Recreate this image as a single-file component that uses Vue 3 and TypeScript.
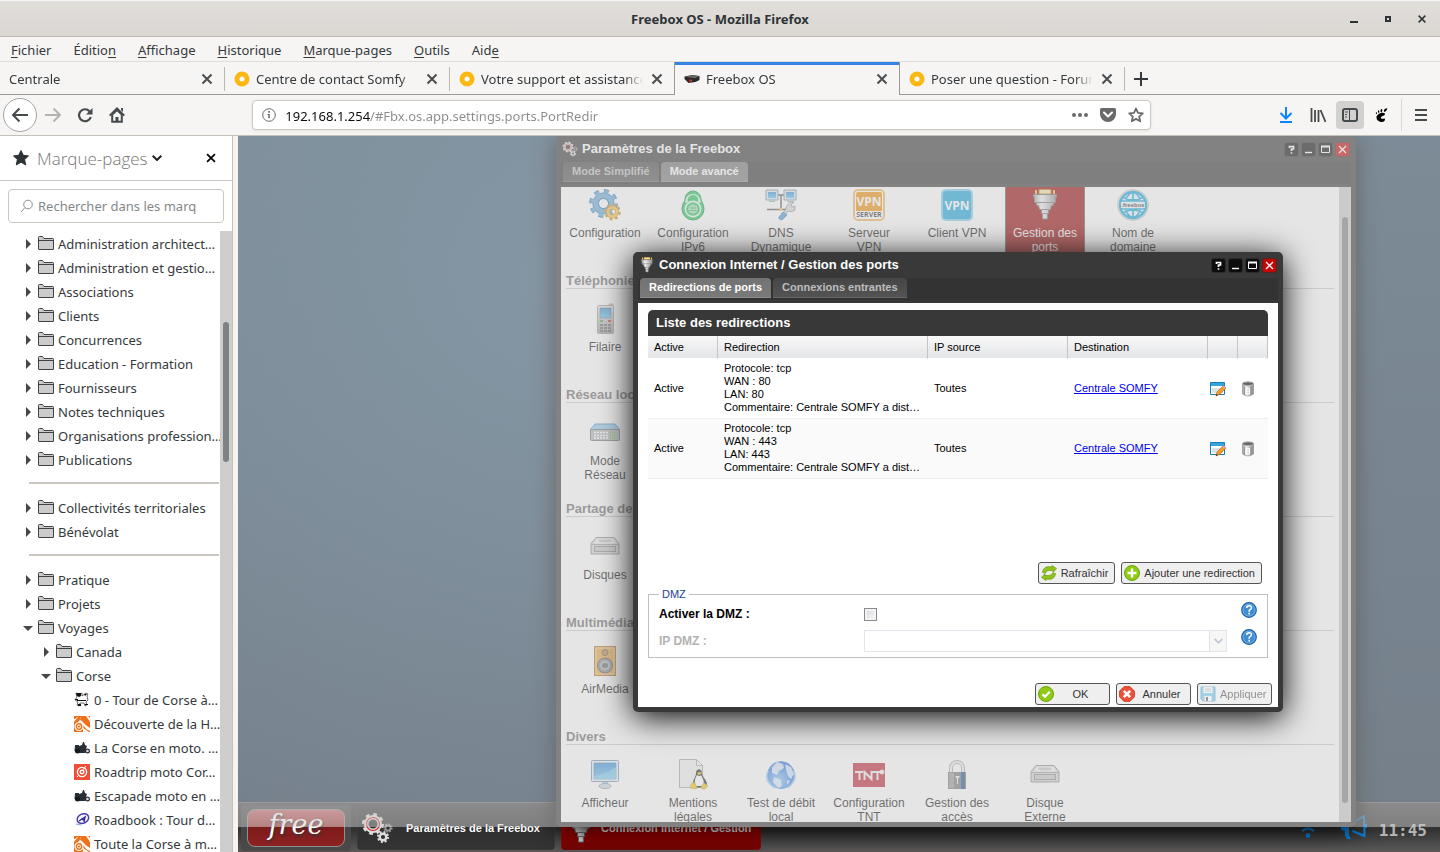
<script setup lang="ts">
import { ref } from 'vue'

interface TreeRow {
  label?: string
  icon?: string
  depth: number
  open?: boolean
}
interface AppItem {
  icon: string
  lines: string[]
  selected?: boolean
}
interface Section {
  title?: string
  items: AppItem[]
}

const menus: string[][] = [
  ['', 'F', 'ichier'],
  ['Éditio', 'n', ''],
  ['', 'A', 'ffichage'],
  ['', 'H', 'istorique'],
  ['', 'M', 'arque-pages'],
  ['', 'O', 'utils'],
  ['Aid', 'e', ''],
]

const tabs = [
  { label: 'Centrale', icon: '', active: false },
  { label: 'Centre de contact Somfy', icon: 'somfy', active: false },
  { label: 'Votre support et assistance', icon: 'somfy', active: false },
  { label: 'Freebox OS', icon: 'box', active: true },
  { label: 'Poser une question - Forum', icon: 'somfy', active: false },
]

const tree: TreeRow[] = [
  { label: 'Administration architect…', depth: 0 },
  { label: 'Administration et gestio…', depth: 0 },
  { label: 'Associations', depth: 0 },
  { label: 'Clients', depth: 0 },
  { label: 'Concurrences', depth: 0 },
  { label: 'Education - Formation', depth: 0 },
  { label: 'Fournisseurs', depth: 0 },
  { label: 'Notes techniques', depth: 0 },
  { label: 'Organisations profession…', depth: 0 },
  { label: 'Publications', depth: 0 },
  { depth: 0 },
  { label: 'Collectivités territoriales', depth: 0 },
  { label: 'Bénévolat', depth: 0 },
  { depth: 0 },
  { label: 'Pratique', depth: 0 },
  { label: 'Projets', depth: 0 },
  { label: 'Voyages', depth: 0, open: true },
  { label: 'Canada', depth: 1 },
  { label: 'Corse', depth: 1, open: true },
  { label: '0 - Tour de Corse à…', depth: 2, icon: 'fav-cow' },
  { label: 'Découverte de la H…', depth: 2, icon: 'fav-orange' },
  { label: 'La Corse en moto. …', depth: 2, icon: 'fav-moto' },
  { label: 'Roadtrip moto Cor…', depth: 2, icon: 'fav-red' },
  { label: 'Escapade moto en …', depth: 2, icon: 'fav-moto' },
  { label: 'Roadbook : Tour d…', depth: 2, icon: 'fav-blue' },
  { label: 'Toute la Corse à m…', depth: 2, icon: 'fav-orange' },
]

const sections: Section[] = [
  {
    items: [
      { icon: 'gears', lines: ['Configuration'] },
      { icon: 'ipv6', lines: ['Configuration', 'IPv6'] },
      { icon: 'dns', lines: ['DNS', 'Dynamique'] },
      { icon: 'vpnserver', lines: ['Serveur', 'VPN'] },
      { icon: 'vpn', lines: ['Client VPN'] },
      { icon: 'plug', lines: ['Gestion des', 'ports'], selected: true },
      { icon: 'domain', lines: ['Nom de', 'domaine'] },
    ],
  },
  { title: 'Téléphonie', items: [{ icon: 'phone', lines: ['Filaire'] }] },
  { title: 'Réseau local', items: [{ icon: 'switch', lines: ['Mode', 'Réseau'] }] },
  { title: 'Partage de fichiers', items: [{ icon: 'disk', lines: ['Disques'] }] },
  { title: 'Multimédia', items: [{ icon: 'speaker', lines: ['AirMedia'] }] },
  {
    title: 'Divers',
    items: [
      { icon: 'monitor', lines: ['Afficheur'] },
      { icon: 'tux', lines: ['Mentions', 'légales'] },
      { icon: 'globe', lines: ['Test de débit', 'local'] },
      { icon: 'tnt', lines: ['Configuration', 'TNT'] },
      { icon: 'lock', lines: ['Gestion des', 'accès'] },
      { icon: 'disk', lines: ['Disque', 'Externe'] },
    ],
  },
]

const redirections = [
  { active: 'Active', proto: 'tcp', wan: '80', lan: '80', source: 'Toutes', target: 'Centrale SOMFY' },
  { active: 'Active', proto: 'tcp', wan: '443', lan: '443', source: 'Toutes', target: 'Centrale SOMFY' },
]

const tools = ['help', 'min', 'max', 'close']
const url = ref('192.168.1.254/#Fbx.os.app.settings.ports.PortRedir')
const search = ref('')
const dmz = ref(false)
</script>

<template>
  <div class="screen">
    <svg class="defs" aria-hidden="true">
      <defs>
        <linearGradient id="gSky" x1="0" y1="0" x2="0" y2="1"><stop offset="0" stop-color="#3a8fd8" /><stop offset="1" stop-color="#63c4f0" /></linearGradient>
        <linearGradient id="gGrey" x1="0" y1="0" x2="0" y2="1"><stop offset="0" stop-color="#e8e8e8" /><stop offset="1" stop-color="#9a9a9a" /></linearGradient>
        <linearGradient id="gMetal" x1="0" y1="0" x2="1" y2="0"><stop offset="0" stop-color="#9a9a9a" /><stop offset=".35" stop-color="#f0f0f0" /><stop offset="1" stop-color="#888" /></linearGradient>
        <radialGradient id="gGlobe" cx=".4" cy=".7" r=".7"><stop offset="0" stop-color="#8fd0ff" /><stop offset="1" stop-color="#1b62d8" /></radialGradient>
      </defs>

      <symbol id="x" viewBox="0 0 16 16"><path d="M3.5 3.5l9 9M12.5 3.5l-9 9" stroke="currentColor" stroke-width="2" fill="none" /></symbol>
      <symbol id="plus" viewBox="0 0 16 16"><path d="M8 1v14M1 8h14" stroke="currentColor" stroke-width="2" fill="none" /></symbol>
      <symbol id="somfy" viewBox="0 0 16 16"><circle cx="8" cy="8" r="5" fill="#fff" stroke="#fbb812" stroke-width="5" /></symbol>
      <symbol id="box" viewBox="0 0 16 16"><path d="M.5 5.500l8-1.500 7 1v4l-4 2-7 1-4-4z" fill="#2a2a2a" /><path d="M1 5.700l8-1.500 6 1-4 2z" fill="#6b6a60" /><path d="M5 8.500h2.500V11H5z" fill="#c02525" /><path d="M7 9h1v1H7z" fill="#5a9a30" /></symbol>

      <symbol id="back" viewBox="0 0 18 18"><path d="M17 9H2M8.500 2.500L2 9l6.500 6.500" stroke="currentColor" stroke-width="2" fill="none" /></symbol>
      <symbol id="forward" viewBox="0 0 18 18"><path d="M1 9h15M9.500 2.500L16 9l-6.500 6.500" stroke="currentColor" stroke-width="2" fill="none" /></symbol>
      <symbol id="reload" viewBox="0 0 16 16"><path d="M12.500 4.200A6 6 0 1 0 13.800 10" stroke="currentColor" stroke-width="2.200" fill="none" /><path d="M15.500 1v6.500H9z" fill="currentColor" /></symbol>
      <symbol id="home" viewBox="0 0 16 16"><path d="M8 0l8 8-1.300 1.300L8 2.700 1.300 9.300 0 8z" fill="currentColor" /><path d="M3.200 7.500v7.300h9.600V7.500L8 3z" fill="none" stroke="currentColor" stroke-width="2" /><path d="M6.500 10h3v5h-3z" fill="currentColor" /><path d="M12 1h2v4l-2-2z" fill="currentColor" /></symbol>
      <symbol id="info" viewBox="0 0 14 14"><circle cx="7" cy="7" r="6.300" fill="none" stroke="currentColor" /><path d="M6.200 3h1.700v1.700H6.200zM5.500 6h2.300v4.300H6.300V7h-.8z" fill="currentColor" /></symbol>
      <symbol id="dots" viewBox="0 0 16 16"><circle cx="2" cy="8" r="2" fill="currentColor" /><circle cx="8" cy="8" r="2" fill="currentColor" /><circle cx="14" cy="8" r="2" fill="currentColor" /></symbol>
      <symbol id="pocket" viewBox="0 0 16 16"><path d="M1.500 1h13A1.500 1.500 0 0 1 16 2.500V7A8 8 0 0 1 0 7V2.500A1.500 1.500 0 0 1 1.500 1z" fill="currentColor" /><path d="M4 5.500l4 4 4-4" stroke="#fff" stroke-width="2" stroke-linecap="round" stroke-linejoin="round" fill="none" /></symbol>
      <symbol id="star" viewBox="0 0 16 16"><path d="M8 1.500l2 4.400 4.800.5-3.600 3.200 1 4.700L8 11.900l-4.200 2.400 1-4.700L1.200 6.400 6 5.900z" fill="none" stroke="currentColor" stroke-width="1.800" stroke-linejoin="round" /></symbol>
      <symbol id="starfull" viewBox="0 0 16 16"><path d="M8 .5l2.300 4.800 5.200.6-3.900 3.600 1.100 5.400L8 12.200 3.300 14.900l1.100-5.400L.5 5.900l5.200-.6z" fill="currentColor" stroke="currentColor" stroke-linejoin="round" /></symbol>
      <symbol id="download" viewBox="0 0 14 16"><path d="M7 0v11M1.500 6L7 11.500 12.500 6M1 15h12" stroke="currentColor" stroke-width="2" fill="none" /></symbol>
      <symbol id="library" viewBox="0 0 16 16"><path d="M1.500 1v14M5 3v12M8.500 3v12M10.500 3l5 12" stroke="currentColor" stroke-width="1.800" fill="none" /></symbol>
      <symbol id="sidebar" viewBox="0 0 16 14"><rect x="1" y="1" width="14" height="12" rx="2" fill="none" stroke="currentColor" stroke-width="2" /><path d="M7.500 1v12M3 4h3M3 6.500h2M3 9h2" stroke="currentColor" stroke-width="1" fill="none" /></symbol>
      <symbol id="foot" viewBox="0 0 12 14"><path d="M11.500.2C8.500.2 7.600 3.600 9 3.800s3.500-3.600 2.500-3.600zM6 1c-1.400.4-1.200 3.300-.2 3.300S7.300.8 6 1zM3 2.300c-1.100.5-.6 2.700.3 2.600S4 2 3 2.300zM.7 4.200c-.9.500-.1 2 .6 1.800S1.500 3.800.7 4.200zM9.300 5.500C7.500 3.600 1 6 1 9.300S4 14 6.300 14s3.500-1.600 3.100-3c-.4-1.200-2 .1-3.300-.3s-.8-2 .6-2.500 3.600-1.500 2.600-2.700z" fill="currentColor" /></symbol>
      <symbol id="burger" viewBox="0 0 12 12"><path d="M0 1h12M0 6h12M0 11h12" stroke="currentColor" stroke-width="2" /></symbol>
      <symbol id="chev" viewBox="0 0 10 6"><path d="M.7.700L5 5 9.300.7" stroke="currentColor" stroke-width="2" fill="none" /></symbol>
      <symbol id="search" viewBox="0 0 14 14"><circle cx="8" cy="5.500" r="4.300" fill="none" stroke="currentColor" /><path d="M5 8.500L1 13" stroke="currentColor" /></symbol>
      <symbol id="folder" viewBox="0 0 16 16"><path d="M.5 13V1.500a1 1 0 0 1 1-1h3l1.500 2h8.500a1 1 0 0 1 1 1V13a.5.500 0 0 1-.5.500H1A.5.500 0 0 1 .5 13z" fill="#ccc" stroke="#3f4143" /><path d="M1 4.500h14.500" stroke="#3f4143" /></symbol>

      <symbol id="fav-cow" viewBox="0 0 16 16"><path d="M2 1l3 1 3-1v3l4-3 2 1-1 2 1 4-2 2 1 3-2 1-1-3H6l-1 3-2-1 1-3-3-2 2-3z" fill="#fff" stroke="#444" stroke-width=".8" /><path d="M2 1h5v3L5 5 3 4zM10 2h3l-2 2zM3 8h9v1H3zM4 12h3v2H4zM11 12h3v1h-3zM1 7h3v1H1z" fill="#111" /></symbol>
      <symbol id="fav-orange" viewBox="0 0 16 16"><path d="M0 0h16v16H0z" fill="#f07018" /><path d="M5 0L1 3H0v3q3-4 5-6zM8 0c-3 3-3 4 0 5 2 2 4 5 8 7v3l-4-2C9 8 8 7 4 6c2-1 2-4 4-6zM12 0h2l2 2v4z" fill="#fff" /><circle cx="5" cy="10.500" r="4" fill="#f07018" stroke="#fff" stroke-width="1.200" /><circle cx="5" cy="10.500" r="1.600" fill="none" stroke="#fff" /><path d="M9 12l6 4H9z" fill="#fff" /></symbol>
      <symbol id="fav-moto" viewBox="0 0 16 16"><path d="M1 5h4v1l3-1 1-3h1l1 3 2 1-1 3 1 2-2 2H3L.5 11z" fill="#2a2e36" /><circle cx="3.500" cy="11" r="2.500" fill="#15181d" /><circle cx="13.500" cy="11" r="1.900" fill="#ddd" stroke="#2a2e36" stroke-width="1.200" /></symbol>
      <symbol id="fav-red" viewBox="0 0 16 16"><path d="M0 0h16v16H0z" fill="#ee4e36" /><circle cx="8" cy="8" r="4.600" fill="none" stroke="#fff" stroke-width="1.400" /><circle cx="8" cy="8" r="1.800" fill="none" stroke="#fff" stroke-width="1.400" /><path d="M8 7l4-5M3 13l2-2" stroke="#fff" /></symbol>
      <symbol id="fav-blue" viewBox="0 0 16 16"><ellipse cx="9" cy="7" rx="6" ry="4.600" transform="rotate(-25 8 7)" fill="#f5f3ff" stroke="#4a3fae" stroke-width="1.500" /><path d="M5 9l6-4-1 5M7 7l4 1" stroke="#31298c" stroke-width="1.400" fill="none" /><path d="M2 12l5 1" stroke="#8aa0d8" /></symbol>

      <symbol id="t-help" viewBox="0 0 13 13"><path d="M4.500 5V3.500h4V6H6.500v2M6.500 9.200v1.600" stroke="#fff" stroke-width="1.700" fill="none" /></symbol>
      <symbol id="t-min" viewBox="0 0 13 13"><path d="M3 9.500h7" stroke="#fff" stroke-width="1.400" /></symbol>
      <symbol id="t-max" viewBox="0 0 13 13"><path d="M2.500 3.500h8v6h-8z" fill="none" stroke="#fff" /><path d="M2 3.500h9" stroke="#fff" stroke-width="2" /></symbol>
      <symbol id="t-close" viewBox="0 0 13 13"><path d="M3 3l7 7M10 3l-7 7" stroke="#fff" stroke-width="1.300" /></symbol>

      <symbol id="redgears" viewBox="0 0 32 32">
        <circle cx="12" cy="12" r="9" fill="none" stroke="#ddd" stroke-width="4" stroke-dasharray="3.530" /><circle cx="12" cy="12" r="6.800" fill="none" stroke="#ddd" stroke-width="4.500" /><circle cx="12" cy="12" r="6.500" fill="none" stroke="#d82020" stroke-width="1.200" />
        <circle cx="22" cy="25" r="4.800" fill="none" stroke="#ddd" stroke-width="2.500" stroke-dasharray="1.880" /><circle cx="22" cy="25" r="3.300" fill="none" stroke="#ddd" stroke-width="2.400" />
        <circle cx="27" cy="16" r="3.700" fill="none" stroke="#999" stroke-width="2" stroke-dasharray="1.450" /><circle cx="27" cy="16" r="2.600" fill="none" stroke="#999" stroke-width="1.700" />
      </symbol>

      <symbol id="gears" viewBox="0 0 32 32">
        <circle cx="14.500" cy="14.500" r="12" fill="none" stroke="#3a7fb8" stroke-width="5" stroke-dasharray="4.710" /><circle cx="14.500" cy="14.500" r="7.800" fill="none" stroke="#3a7fb8" stroke-width="6.500" /><circle cx="14.500" cy="14.500" r="8" fill="none" stroke="#68a9d8" stroke-width="4.500" /><circle cx="14.500" cy="14.500" r="11.700" fill="none" stroke="#68a9d8" stroke-width="3.500" stroke-dasharray="3.400 5.790" stroke-dashoffset="-.6" />
        <circle cx="23.500" cy="23" r="6.800" fill="none" stroke="#c98a18" stroke-width="3" stroke-dasharray="2.670" /><circle cx="23.500" cy="23" r="4.500" fill="none" stroke="#c98a18" stroke-width="4" /><circle cx="23.500" cy="23" r="4.500" fill="none" stroke="#f7c04a" stroke-width="2.600" />
      </symbol>
      <symbol id="ipv6" viewBox="0 0 32 32">
        <path d="M8 10a8 8 0 0 1 16 0c0 2 3 5 3 10a11 11 0 0 1-22 0c0-5 3-8 3-10z" fill="#22c05a" stroke="#12a046" stroke-width="1" /><path d="M8.500 14c-1-12 16-12 15 0l-2.500-1c0-6-10-6-10 0z" fill="#e8f8ee" /><path d="M10.500 12c0-8 11-8 11 0q-5.500-3-11 0z" fill="#22c05a" /><circle cx="16" cy="20" r="7.600" fill="#22c05a" stroke="#e8f8ee" stroke-width="1.600" /><circle cx="16" cy="20" r="4.600" fill="#e8f8ee" /><path d="M11.500 19h9M11.500 21.500h9M16 15.500v9M14 16v8M18 16v8" stroke="#22b055" stroke-width=".8" />
      </symbol>
      <symbol id="dns" viewBox="0 0 32 32">
        <path d="M13 6h6M16 6v14M2 20.500h28" stroke="#555" stroke-width="1.500" fill="none" /><path d="M1 1h12v10H1zM19 1h12v10H19z" fill="#dce6ee" stroke="#7890a8" /><path d="M3 3h8v6H3zM21 3h8v6h-8z" fill="url(#gSky)" /><path d="M4 12h6v1H4zM22 12h6v1h-6z" fill="#8ba" /><path d="M29 13l-3 3 1 2 3-1v3c-1 3-5 3-7 2l-3 4-2-2 3-4c0-3 2-7 8-7z" fill="#d4d8da" stroke="#7c8488" stroke-width=".8" /><path d="M18 23l4 3-4 4c-2 2-5 0-4-2z" fill="#4b9bdc" stroke="#2c6ca8" stroke-width=".7" /><circle cx="16" cy="20.500" r="1.800" fill="#f6b93d" />
      </symbol>
      <symbol id="vpnserver" viewBox="0 0 32 32"><rect x="1" y="1" width="30" height="30" rx="4" fill="#fff" stroke="#f2b35a" stroke-width="2" /><path d="M3 5a2 2 0 0 1 2-2h22a2 2 0 0 1 2 2v17H3z" fill="#ee8f0c" /><text x="16" y="17" font-family="Open Sans" font-size="12" font-weight="700" text-anchor="middle" fill="#fff">VPN</text><text x="16" y="28" font-family="Open Sans" font-size="7" font-weight="700" text-anchor="middle" fill="#333">SERVER</text></symbol>
      <symbol id="vpn" viewBox="0 0 32 32"><rect x="1" y="1" width="30" height="30" rx="4" fill="#15a5dc" stroke="#7fcdec" stroke-width="2" /><text x="16" y="21" font-family="Open Sans" font-size="12" font-weight="700" text-anchor="middle" fill="#fff">VPN</text></symbol>
      <symbol id="plug" viewBox="0 0 32 32">
        <path d="M6 1h2v4h16V1h2v5H6z" fill="#f5b93c" /><path d="M10 .5h12V5H10z" fill="#f9e3a8" stroke="#a97a1c" /><path d="M4.500 5.500h23v3h-1v5h-2v3h-2l-1 4h-2v4h-1v5.500h-5v-5.500h-1v-4h-2l-1-4h-2v-3h-2v-5h-1z" fill="url(#gMetal)" stroke="#6c6c6c" /><path d="M8 13.500h16M11 20.500h10M14 24.500h4" stroke="#777" />
      </symbol>
      <symbol id="domain" viewBox="0 0 32 32"><circle cx="16" cy="16" r="15.500" fill="#ddd" stroke="#c4c4c4" /><circle cx="16" cy="16" r="13" fill="#eef8fc" stroke="#12a4dc" stroke-width="2.400" /><path d="M16 3v8M16 21v8M9 11c1-4 4-7 7-8 3 1 6 4 7 8M9 21c1 4 4 7 7 8 3-1 6-4 7-8M5 8q11 6 22 0M5 24q11-6 22 0M3 12h26M3 20h26" fill="none" stroke="#12a4dc" stroke-width="1.700" /><path d="M4 13h24v6H4z" fill="#eef8fc" /><text x="16" y="18" font-family="Liberation Sans" font-size="6" font-weight="700" text-anchor="middle" fill="#333">.freebox</text></symbol>
      <symbol id="phone" viewBox="0 0 32 32"><path d="M20 1h4v5h-4z" fill="#ddd" stroke="#999" stroke-width=".8" /><rect x="8.500" y="2.500" width="16" height="28" rx="1" fill="url(#gGrey)" stroke="#9a9a9a" /><path d="M11 5h11v10H11z" fill="url(#gSky)" stroke="#666" stroke-width=".5" /><path d="M11 17h3v2h-3z" fill="#55a832" /><path d="M19 17h3v2h-3z" fill="#d03030" /><path d="M11 22h3M15 22h3M19 22h3M11 25h3M15 25h3M19 25h3M11 28h3M15 28h3M19 28h3" stroke="#555" stroke-width="1.500" /></symbol>
      <symbol id="switch" viewBox="0 0 32 32"><path d="M6 7h20l5 6H1z" fill="#8fc8f0" stroke="#4a8fc4" /><rect x="1.500" y="12.500" width="29" height="11" rx="1" fill="#aeb3b6" stroke="#6e7478" /><path d="M5 15.500h14M5 18.500h14M5 21h14" stroke="#fff" stroke-width="1.500" stroke-dasharray="2 1" /><path d="M21 15.500h6M21 18.500h6M21 21h6" stroke="#6cc02a" stroke-width="1.500" stroke-dasharray="1 1" /></symbol>
      <symbol id="disk" viewBox="0 0 32 32"><path d="M7 6.500h18l5 6v10.500h-28V12.500z" fill="#d4d4d4" stroke="#8b8b8b" /><path d="M8 7.500h16l3 5H5z" fill="#f3f3f3" /><path d="M10 8.500h12l1 2q-7 2-14 0z" fill="#c5c5c5" /><path d="M2 13.500h28" stroke="#9b9b9b" /><rect x="5.500" y="15.500" width="21" height="5" fill="#c6c6c6" stroke="#8a8a8a" /></symbol>
      <symbol id="speaker" viewBox="0 0 32 32"><rect x="5.500" y="1.500" width="21" height="29" fill="#e7a447" stroke="#a97227" /><path d="M7 3h18v26H7z" fill="none" stroke="#f5cf92" /><circle cx="16" cy="7.500" r="3" fill="#b48a50" stroke="#7c5a2c" /><circle cx="16" cy="20.500" r="7.500" fill="#878b90" stroke="#50545a" /><circle cx="16" cy="20.500" r="5" fill="#aaaeb2" /><ellipse cx="16" cy="20.500" rx="3" ry="2.500" fill="#64686c" /></symbol>
      <symbol id="monitor" viewBox="0 0 32 32"><rect x="2.500" y="1.500" width="27" height="21" rx="1" fill="#e8f1f6" stroke="#6c93b0" /><path d="M5 4h22v16H5z" fill="url(#gSky)" stroke="#3d7eae" stroke-width=".6" /><path d="M5 17q11-1 22-9v12H5z" fill="#8dd4f5" opacity=".6" /><path d="M13 23h6v3h-6z" fill="#a8bfcd" /><ellipse cx="16" cy="27" rx="6" ry="2.500" fill="#cfdde6" stroke="#86a2b5" /></symbol>
      <symbol id="tux" viewBox="0 0 32 32"><path d="M2.500.5h17l6 6v22h-23z" fill="#f3f3f3" stroke="#a5a5a5" /><path d="M19.500.5v6h6z" fill="#fff" stroke="#a5a5a5" /><path d="M19 14c0-5 6-5 6 0 0 4 5 7 5 11s-13 5-14 1 3-8 3-12z" fill="#252525" /><path d="M20 16c3 2 4 0 4 0 2 4 4 7 2 11h-7c-2-4-1-8 1-11z" fill="#fff" /><path d="M20 14l2 2 3-2-2-1zM14 25l3-2 3 5-1 2-6-1zM27 24l4 3-3 3h-3l-1-2z" fill="#f3c31c" stroke="#b98c10" stroke-width=".5" /></symbol>
      <symbol id="globe" viewBox="0 0 32 32"><circle cx="16" cy="16" r="13.500" fill="url(#gGlobe)" stroke="#4f93e8" /><path d="M7 8l5-5 6 2 1 4-5 3-2 4-5-2zM20 5l6 3 3 7-3 5-3-3-2-6zM9 18l7 3 1 6-4 2-5-6zM22 21l3 1-3 4z" fill="#e8f4ff" opacity=".85" /><path d="M3 12q-5 10 7 17M29 12q4 9-6 17" stroke="#9fd0ff" fill="none" stroke-width="1.500" /></symbol>
      <symbol id="tnt" viewBox="0 0 32 32"><path d="M0 4h32v24H0z" fill="#c02436" /><path d="M2 13h8M6.500 13v8M11.500 21v-8l7 7v-8M19 13h11M24.500 13v8" stroke="#eee" stroke-width="2" fill="none" /><circle cx="29" cy="13" r="2.500" fill="#fff" opacity=".8" /></symbol>
      <symbol id="lock" viewBox="0 0 32 32"><path d="M10 14V9a6 6 0 0 1 12 0v5" fill="none" stroke="#a8a8a8" stroke-width="4" /><path d="M10 14V9a6 6 0 0 1 12 0v5" fill="none" stroke="#f3f3f3" stroke-width="2" /><path d="M7 13h18v17H7z" fill="#777" /><path d="M8 14h5v15H8z" fill="#999" /><path d="M20 13h4v17h-4z" fill="#1e5592" /><path d="M14 17h5l-2 3v5h-1v-5z" fill="#eee" /></symbol>

      <symbol id="edit" viewBox="0 0 16 16"><path d="M.5 1.500h14v12H.5z" fill="#fff" stroke="#157fb8" /><path d="M1 2h13v3H1z" fill="#37a3d8" /><path d="M2 7h11v5H2z" fill="#dce2e6" /><path d="M6 15l1-4 6-6 3 2-6 6z" fill="#f59d2a" stroke="#b05c08" stroke-width=".6" /><path d="M12.500 5.500l1.500-1 2 2-1.500 1.500z" fill="#e79bc0" /><path d="M6 15l.6-2 1.400 1z" fill="#222" /></symbol>
      <symbol id="trash" viewBox="0 0 16 16"><path d="M2.500 3v10q5.500 4 11 0V3z" fill="url(#gMetal)" stroke="#888" stroke-width=".6" /><ellipse cx="8" cy="2.700" rx="5.500" ry="1.900" fill="#666" stroke="#b5b5b5" /><path d="M6 7.500h3.500V13H6zM6 10h3.500" fill="none" stroke="#fff" /><path d="M11 6v8M4.500 6v8" stroke="#777" stroke-width=".6" /></symbol>
      <symbol id="refresh" viewBox="0 0 16 16"><path d="M1.500 7.500C2 3 5 1.800 7 1.800h4V.5L15.500 3.500 12 7.500V5.500H8Q5 5.500 4.500 8zM14.500 8.500C14 13 11 14.200 9 14.200H5v1.300L.5 12.500 4 8.500v2h4q3 0 3.500-2.500z" fill="#8ec31c" stroke="#6a9c10" stroke-width=".7" stroke-linejoin="round" /></symbol>
      <symbol id="add" viewBox="0 0 16 16"><circle cx="8" cy="8" r="7.500" fill="#8fca14" stroke="#6ba30c" /><path d="M8 3.500v9M3.500 8h9" stroke="#fff" stroke-width="2.400" /></symbol>
      <symbol id="ok" viewBox="0 0 16 16"><circle cx="8" cy="8" r="7.500" fill="#8fca14" stroke="#6ba30c" /><path d="M4.500 8.200l2.500 2.500 4.700-5" stroke="#fff" stroke-width="2.200" fill="none" /></symbol>
      <symbol id="cancel" viewBox="0 0 16 16"><path d="M5 .7h6L15.300 5v6L11 15.300H5L.7 11V5z" fill="#f0513a" stroke="#c23a22" /><path d="M4.800 4.800l6.400 6.400M11.200 4.800l-6.400 6.400" stroke="#fff" stroke-width="2.600" /></symbol>
      <symbol id="save" viewBox="0 0 16 16"><path d="M1 1h14v14H3l-2-2z" fill="#5ab4e0" stroke="#3d94c4" /><path d="M3.500 1h9v6h-9z" fill="#eee" /><path d="M5 3h6M5 5h6" stroke="#aaa" /><path d="M4.500 10h7v5h-7z" fill="#f4f4f4" /><path d="M6 11h2v4H6z" fill="#444" /></symbol>
      <symbol id="help" viewBox="0 0 16 16"><circle cx="8" cy="8" r="7.300" fill="#3f8dd0" stroke="#1b5da6" stroke-width="1.200" /><circle cx="8" cy="8" r="6" fill="none" stroke="#8fc2ea" stroke-width=".7" /><path d="M5.700 6q0-2.300 2.400-2.300T10.400 6Q10.400 7.200 8.200 8.400V9.700M8.200 10.800v1.600" stroke="#fff" stroke-width="1.500" fill="none" /></symbol>
      <symbol id="wifi" viewBox="0 0 20 20"><circle cx="10" cy="17.500" r="2.400" fill="#0a84e0" /><path d="M4 13q6-5 12 0M1 8.500q9-7 18 0" stroke="#0a84e0" stroke-width="2.500" fill="none" /></symbol>
      <symbol id="mega" viewBox="0 0 26 26"><path d="M1 11l7-1L23 1l.500 20-12-5" fill="none" stroke="#0a84e0" stroke-width="2" /><path d="M0 11l8-1v6q-1 4 2 8H6q-3-4-2-8l-4-1z" fill="#0a84e0" /><path d="M25 9v4" stroke="#0a84e0" stroke-width="2" /></symbol>
    </svg>

    <header class="titlebar">
      <h1>Freebox OS - Mozilla Firefox</h1>
      <div class="wm">
        <button aria-label="Réduire"><i class="wm-min"></i></button>
        <button aria-label="Agrandir"><i class="wm-max"></i></button>
        <button aria-label="Fermer"><svg width="12" height="12"><use href="#x" /></svg></button>
      </div>
    </header>

    <nav class="menubar">
      <button v-for="m in menus" :key="m.join('')">{{ m[0] }}<u>{{ m[1] }}</u>{{ m[2] }}</button>
    </nav>

    <div class="tabs">
      <div v-for="t in tabs" :key="t.label" class="tab" :class="{ active: t.active }">
        <svg v-if="t.icon" width="16" height="16"><use :href="'#' + t.icon" /></svg>
        <button class="tab-label">{{ t.label }}</button>
        <button class="tab-close" aria-label="Fermer l’onglet"><svg width="16" height="16"><use href="#x" /></svg></button>
      </div>
      <button class="newtab" aria-label="Nouvel onglet"><svg width="16" height="16"><use href="#plus" /></svg></button>
    </div>

    <div class="navbar">
      <button class="back" aria-label="Reculer"><svg width="18" height="18"><use href="#back" /></svg></button>
      <button class="nb off" aria-label="Avancer"><svg width="18" height="18"><use href="#forward" /></svg></button>
      <button class="nb" aria-label="Actualiser"><svg width="16" height="16"><use href="#reload" /></svg></button>
      <button class="nb" aria-label="Accueil"><svg width="16" height="16"><use href="#home" /></svg></button>
      <div class="spring"></div>
      <div class="urlbar">
        <svg width="14" height="14"><use href="#info" /></svg>
        <input v-model="url" type="text" aria-label="Adresse" spellcheck="false" />
        <button aria-label="Actions"><svg width="16" height="16"><use href="#dots" /></svg></button>
        <button aria-label="Pocket"><svg width="16" height="16"><use href="#pocket" /></svg></button>
        <button aria-label="Marquer"><svg width="16" height="16"><use href="#star" /></svg></button>
      </div>
      <div class="spring"></div>
      <button class="nb dl" aria-label="Téléchargements"><svg width="14" height="16"><use href="#download" /></svg></button>
      <button class="nb" aria-label="Bibliothèque"><svg width="16" height="16"><use href="#library" /></svg></button>
      <button class="nb on" aria-label="Panneau latéral"><svg width="16" height="14"><use href="#sidebar" /></svg></button>
      <button class="nb gnome" aria-label="GNOME"><svg width="13" height="14"><use href="#foot" /></svg></button>
      <button class="nb menu" aria-label="Menu"><svg width="12" height="12"><use href="#burger" /></svg></button>
    </div>

    <div class="content">
      <aside class="sidebar">
        <div class="side-head">
          <svg width="16" height="16"><use href="#starfull" /></svg>
          <button class="side-title">Marque-pages <svg width="10" height="6"><use href="#chev" /></svg></button>
          <button class="side-close" aria-label="Fermer le panneau"><svg width="14" height="14"><use href="#x" /></svg></button>
        </div>
        <label class="side-search">
          <svg width="14" height="14"><use href="#search" /></svg>
          <input v-model="search" type="text" placeholder="Rechercher dans les marque-pages" aria-label="Rechercher dans les marque-pages" />
        </label>
        <div class="tree-wrap">
          <ul class="tree">
            <li v-for="(r, i) in tree" :key="i" :class="'d' + r.depth">
              <hr v-if="!r.label" />
              <template v-else>
                <span v-if="!r.icon" class="twisty"><i :class="r.open ? 'open' : 'shut'"></i></span>
                <svg width="16" height="16"><use :href="'#' + (r.icon || 'folder')" /></svg>
                <span class="tree-label">{{ r.label }}</span>
              </template>
            </li>
          </ul>
          <div class="side-scroll"><i></i></div>
        </div>
      </aside>
      <div class="splitter"></div>

      <main class="desktop">
        <footer class="taskbar">
          <button class="start"><span>free</span></button>
          <button class="task"><svg width="32" height="32"><use href="#redgears" /></svg><span>Paramètres de la Freebox</span></button>
          <button class="task red"><svg width="32" height="32"><use href="#plug" /></svg><span>Connexion Internet / Gestion</span></button>
          <div class="tray">
            <svg width="20" height="20"><use href="#wifi" /></svg>
            <svg width="26" height="26"><use href="#mega" /></svg>
            <time>11:45</time>
          </div>
        </footer>

        <section class="win settings">
          <div class="win-title">
            <svg width="16" height="16"><use href="#redgears" /></svg>
            <h2>Paramètres de la Freebox</h2>
            <button v-for="t in tools" :key="t" class="tool" :class="'tool-' + t" :aria-label="t"><svg width="13" height="13"><use :href="'#t-' + t" /></svg></button>
          </div>
          <div class="win-tabs">
            <button>Mode Simplifié</button>
            <button class="sel">Mode avancé</button>
          </div>
          <div class="win-body set-body">
            <div class="set-list">
              <section v-for="(s, i) in sections" :key="i" class="group">
                <h3 v-if="s.title">{{ s.title }}</h3>
                <div class="items" :class="{ first: !s.title }">
                  <button v-for="it in s.items" :key="it.lines.join()" class="item" :class="{ selected: it.selected }">
                    <svg width="32" height="32"><use :href="'#' + it.icon" /></svg>
                    <span v-for="l in it.lines" :key="l">{{ l }}</span>
                  </button>
                </div>
              </section>
            </div>
            <div class="set-scroll"><i></i></div>
          </div>
        </section>

        <div class="veil"></div>

        <section class="win modal">
          <div class="win-title">
            <svg width="16" height="16"><use href="#plug" /></svg>
            <h2>Connexion Internet / Gestion des ports</h2>
            <button v-for="t in tools" :key="t" class="tool" :class="'tool-' + t" :aria-label="t"><svg width="13" height="13"><use :href="'#t-' + t" /></svg></button>
          </div>
          <div class="win-tabs">
            <button class="sel">Redirections de ports</button>
            <button>Connexions entrantes</button>
          </div>
          <div class="win-body modal-body">
            <div class="grid">
              <h3>Liste des redirections</h3>
              <table>
                <colgroup><col class="c70" /><col /><col class="c140" /><col class="c140" /><col class="c30" /><col class="c30" /></colgroup>
                <thead>
                  <tr><th>Active</th><th>Redirection</th><th>IP source</th><th>Destination</th><th></th><th></th></tr>
                </thead>
                <tbody>
                  <tr v-for="r in redirections" :key="r.wan">
                    <td>{{ r.active }}</td>
                    <td>
                      Protocole: {{ r.proto }}<br />WAN : {{ r.wan }}<br />LAN: {{ r.lan }}<br />Commentaire: Centrale SOMFY a dist…
                    </td>
                    <td>{{ r.source }}</td>
                    <td><a href="#">{{ r.target }}</a></td>
                    <td class="act"><button aria-label="Modifier"><svg width="16" height="16"><use href="#edit" /></svg></button></td>
                    <td class="act"><button aria-label="Supprimer"><svg width="16" height="16"><use href="#trash" /></svg></button></td>
                  </tr>
                </tbody>
              </table>
            </div>
            <div class="bar">
              <button class="btn"><svg width="16" height="16"><use href="#refresh" /></svg><span>Rafraîchir</span></button>
              <button class="btn"><svg width="16" height="16"><use href="#add" /></svg><span>Ajouter une redirection</span></button>
            </div>
            <fieldset>
              <legend>DMZ</legend>
              <div class="field">
                <label for="dmz">Activer la DMZ :</label>
                <input id="dmz" v-model="dmz" type="checkbox" />
                <button class="help" aria-label="Aide"><svg width="16" height="16"><use href="#help" /></svg></button>
              </div>
              <div class="field off">
                <label for="dmzip">IP DMZ :</label>
                <div class="combo">
                  <select id="dmzip" disabled><option></option></select>
                  <span class="trigger"><svg width="9" height="6"><use href="#chev" /></svg></span>
                </div>
                <button class="help" aria-label="Aide"><svg width="16" height="16"><use href="#help" /></svg></button>
              </div>
            </fieldset>
            <div class="bar foot">
              <button class="btn wide"><svg width="16" height="16"><use href="#ok" /></svg><span>OK</span></button>
              <button class="btn wide"><svg width="16" height="16"><use href="#cancel" /></svg><span>Annuler</span></button>
              <button class="btn wide" disabled><svg width="16" height="16"><use href="#save" /></svg><span>Appliquer</span></button>
            </div>
          </div>
        </section>
      </main>
    </div>
  </div>
</template>

<style>
body { overflow: hidden; }
</style>

<style scoped>
* { box-sizing: border-box; }
h1, h2, h3, ul { margin: 0; padding: 0; }
svg { display: block; flex: none; }
button { margin: 0; padding: 0; border: 0; background: none; font: inherit; color: inherit; }
.defs { position: absolute; width: 0; height: 0; }
.screen { height: 100vh; display: flex; flex-direction: column; overflow: hidden; font: 13px "Noto Sans", sans-serif; color: #35393c; background: #f6f5f4; }

.titlebar { height: 37px; flex: none; display: grid; grid-template-columns: 1fr auto 1fr; align-items: center; border-top: 1px solid #f4f6f7; border-bottom: 1px solid #bfb8b1; background: linear-gradient(#e1dedb, #dad6d2); color: #2e3436; }
.titlebar h1 { grid-column: 2; font-size: 13px; font-weight: 700; }
.wm { justify-self: end; display: flex; padding-right: 1px; }
.wm button { width: 34px; height: 24px; display: flex; align-items: center; justify-content: center; }
.wm-min { width: 8px; height: 2px; margin-top: 6px; background: #2e3436; }
.wm-max { width: 6px; height: 6px; border: 2px solid #2e3436; }

.menubar { height: 25px; flex: none; display: flex; border-bottom: 1px solid #dfdcd9; }
.menubar button { padding: 2px 11px 0; line-height: 20px; }
.menubar u { text-underline-offset: 2px; }

.tabs { height: 33px; flex: none; display: flex; box-shadow: inset 0 -1px #9b9a98; }
.tab { position: relative; flex: 0 1 225px; min-width: 0; display: flex; align-items: center; padding: 0 10px 0 9px; gap: 6px; }
.tab::after { content: ""; position: absolute; right: 0; top: 5px; height: 24px; width: 1px; background: #b9b7b4; }
.tab.active { margin-left: -1px; flex-basis: 226px; background: #f6f5f4; border: 1px solid #9b9a98; border-top: 0; border-bottom: 0; box-shadow: inset 0 3px #3584e4; padding-right: 9px; }
.tab.active::after { display: none; }
.tab-label { flex: 1; min-width: 0; overflow: hidden; white-space: nowrap; text-align: left; line-height: 32px; padding-top: 1px; mask-image: linear-gradient(to left, transparent, #000 18px); }
.tab-close { width: 16px; flex: none; color: #4a4e50; }
.newtab { width: 32px; display: flex; align-items: center; justify-content: center; color: #35393c; }

.navbar { height: 41px; flex: none; display: flex; align-items: center; padding: 0 4px 0 3px; border-bottom: 1px solid #c4c1b8; color: #454a4d; }
.back { width: 34px; height: 34px; border: 1px solid #a5a5a3; border-radius: 50%; background: #fff; display: flex; align-items: center; justify-content: center; }
.nb { width: 32px; height: 32px; display: flex; align-items: center; justify-content: center; }
.nb.off { color: #b3b3b1; }
.nb.on { width: 28px; height: 28px; margin: 0 2px; border-radius: 4px; background: #d2d1d0; }
.nb.dl { color: #0a84ff; }
.nb.gnome { color: #000; }
.nb.menu { border-left: 1px solid #d9d8d6; margin-left: 3px; width: 35px; padding-left: 5px; }
.spring { flex: 119; }
.urlbar { flex: 885; min-width: 0; height: 30px; display: flex; align-items: center; padding: 0 0 0 9px; border: 1px solid #cdc7c2; border-radius: 4px; background: #fff; box-shadow: 0 1px 3px #e3e1de; color: #6a6a6a; }
.urlbar input { flex: 1; min-width: 0; height: 26px; margin: 0 8px; padding: 2px 0 0 1px; border: 0; outline: 0; font: inherit; color: transparent; background: linear-gradient(to right, #0c0c0d 86px, #8c8c8c 86px); background-clip: text; }
.urlbar button { width: 28px; display: flex; justify-content: center; }

.content { flex: 1; min-height: 0; display: flex; }
.sidebar { width: 233px; flex: none; display: flex; flex-direction: column; background: #fff; border-right: 1px solid #c4c1b8; }
.side-head { height: 45px; flex: none; display: flex; align-items: center; padding: 0 14px 0 13px; border-bottom: 1px solid #cdc7c2; color: #2e3436; }
.side-title { flex: 1; display: flex; align-items: center; gap: 5px; padding-left: 8px; font-family: "Open Sans", sans-serif; font-size: 17px; font-weight: 300; color: #777; }
.side-title svg { color: #1d2022; }
.side-close { color: #000; }
.side-search { height: 34px; flex: none; margin: 8px 8px 0; display: flex; align-items: center; gap: 4px; padding: 0 26px 0 11px; border: 1px solid #cdc7c2; border-radius: 4px; color: #8b8e8f; }
.side-search input { flex: 1; min-width: 0; padding: 0; border: 0; outline: 0; font: inherit; background: none; }
.side-search input::placeholder { color: #85888a; opacity: 1; }
.tree-wrap { flex: 1; min-height: 0; margin-top: 8px; display: flex; }
.tree { flex: 1; min-width: 0; padding-top: 1px; list-style: none; overflow: hidden; }
.tree li { height: 24px; display: flex; align-items: center; white-space: nowrap; }
.tree li.d0 { padding-left: 20px; }
.tree li.d1 { padding-left: 38px; }
.tree li.d2 { padding-left: 74px; }
.tree hr { flex: 1; height: 2px; margin: 0 1px 2px 9px; border: 0; background: #cdc7c2; }
.tree-label { margin-left: 4px; line-height: 24px; }
.twisty { width: 18px; flex: none; display: flex; align-items: center; padding-left: 3px; }
.shut { margin-left: 3px; border: 5px solid transparent; border-left-color: #454849; border-right-width: 0; }
.open { border: 5px solid transparent; border-top-color: #454849; border-bottom-width: 0; }
.side-scroll { width: 12px; flex: none; padding: 91px 3px 0; background: #cecece; }
.side-scroll i { display: block; height: 140px; border-radius: 3px; background: #7e8283; }
.splitter { width: 5px; flex: none; background: #f6f3f1; }

.desktop { position: relative; flex: 1; min-width: 0; overflow: hidden; background: radial-gradient(ellipse 60% 90% at 28% 20%, #3d617d, transparent), linear-gradient(#2d4b62, #1e3248); font-family: "Liberation Sans", Arial, sans-serif; }
.veil { position: absolute; inset: 0 0 25px; background: rgba(204, 204, 204, .5); }

.taskbar { position: absolute; left: 0; right: 0; bottom: 0; height: 50px; display: flex; align-items: center; gap: 6px; padding: 1px 13px 0 3px; border-top: 1px solid #6b6b6b; border-bottom: 1px solid #5e5454; background: linear-gradient(#4b4b4b, #323232 55%, #585858); color: #fff; font-size: 11px; font-weight: 700; }
.start { width: 110px; height: 46px; padding: 4px 6px; border-radius: 3px; background: linear-gradient(#545454, #454545 50%, #4a4a4a); }
.start span { display: block; height: 38px; border: 1px solid #8f8f8f; border-radius: 8px; background: linear-gradient(#c86a6a, #a03a3a 45%, #7c1b1b 48%, #8e2222); font: italic 400 27px/30px "DejaVu Serif", serif; text-align: center; text-shadow: 1px 2px 2px #333; }
.task { width: 198px; height: 44px; display: flex; align-items: center; gap: 13px; padding: 0 4px; border-radius: 3px; background: linear-gradient(#464646, #303030 50%, #343434); overflow: hidden; white-space: nowrap; box-shadow: inset 0 0 1px #777; }
.task.red { width: 200px; gap: 4px; background: linear-gradient(#c00, #a00 50%, #700404); }
.tray { margin-left: auto; display: flex; align-items: center; gap: 12px; }
.tray svg:first-child { margin-right: 11px; }
.tray time { font: 700 16px "DejaVu Sans Mono", monospace; color: #b4b4b4; padding-top: 5px; }

.win { position: absolute; display: flex; flex-direction: column; padding: 0 5px 5px; border-radius: 5px; background: #393939; color: #fff; }
.settings { left: 318px; top: 0; bottom: 25px; width: 800px; box-shadow: 0 2px 25px #000; }
.modal { left: 395px; top: 116px; width: 650px; box-shadow: 0 5px 32px #000; }
.win-title { height: 26px; flex: none; display: flex; align-items: center; padding: 0 2px 0 1px; gap: 4px; }
.win-title h2 { flex: 1; font-size: 13px; font-weight: 700; line-height: 26px; }
.tool { width: 13px; height: 13px; border-radius: 2px; background: #0d0d0d; box-shadow: 0 0 0 1px #2a2a2a; }
.tool-close { background: #c40505; box-shadow: 0 0 0 1px #5c2020; }
.win-tabs { height: 25px; flex: none; display: flex; align-items: flex-start; gap: 2px; padding-left: 2px; background: #333; border-bottom: 3px solid #383838; }
.win-tabs button { height: 20px; padding: 0 9px 2px; border-radius: 4px 4px 0 0; background: linear-gradient(#464646, #545454); font-size: 11px; font-weight: 700; line-height: 18px; color: #bdbdbd; box-shadow: inset 0 -1px #666; }
.win-tabs .sel { background: linear-gradient(#737373, #7a7a7a); color: #fff; box-shadow: inset 0 -1px #8a8a8a; }
.win-body { background: #fff; color: #000; }

.set-body { flex: 1; min-height: 0; display: flex; }
.set-list { flex: 1; min-width: 0; overflow: hidden; }
.group h3 { margin: 0 5px; height: 15px; line-height: 14px; font-size: 13px; font-weight: 700; color: #686868; border-bottom: 1px solid #cbcbcb; white-space: nowrap; }
.items { height: 99px; display: flex; padding: 13px 0 0 3px; }
.item { width: 80px; height: 86px; margin: 0 7px 0 1px; padding-top: 1px; display: flex; flex-direction: column; align-items: center; border: 1px solid transparent; border-top: 0; font-size: 12px; line-height: 14px; color: #0c0c0c; white-space: nowrap; }
.items.first { height: 87px; padding-top: 0; }
.items.first .item { padding-top: 2px; }
.item svg { margin-bottom: 5px; }
.item.selected { background: #960404; border-color: #5e5e5e; color: #fff; }
.set-scroll { width: 12px; flex: none; padding: 30px 3px 0; background: #cacaca; }
.set-scroll i { display: block; height: 586px; border-radius: 3px; background: #7c8082; }

.modal-body { padding: 7px 10px 2px; font-size: 11px; }
.grid { min-height: 252px; }
.grid h3 { height: 26px; padding-left: 8px; border-radius: 5px 5px 0 0; background: #383838; color: #fff; font-size: 13px; line-height: 26px; }
table { width: 100%; table-layout: fixed; border-collapse: separate; border-spacing: 0; }
.c70 { width: 70px; }
.c140 { width: 140px; }
.c30 { width: 30px; }
th { height: 23px; padding: 0 6px 1px; text-align: left; font-weight: 400; border-right: 1px solid #c5c5c5; border-bottom: 1px solid #fff; background: linear-gradient(#f9f9f9, #e3e4e6); background-clip: padding-box; }
td { height: 60px; padding: 3px 6px 4px; line-height: 13px; vertical-align: middle; border-bottom: 1px solid #ededed; white-space: nowrap; }
tbody tr:nth-child(2) td { background: #fafafa; }
td a { color: #0000ee; }
td.act { padding: 0 2px; }
td.act button { display: block; }
.bar { display: flex; justify-content: flex-end; gap: 6px; padding-right: 6px; }
.btn { height: 22px; display: flex; align-items: center; gap: 4px; padding: 0 6px 0 2px; border: 1px solid #555; border-radius: 3px; background: #f0eff0; color: #333; font-size: 11px; }
.btn span { flex: 1; text-align: center; }
.btn.wide { width: 75px; }
.btn:disabled svg, .btn:disabled span { opacity: .5; }
.foot { margin: 25px -4px 0 0; padding-right: 0; }
fieldset { min-width: 0; margin: 4px 0 0; padding: 0 10px 3px; border: 1px solid #bfbfbf; }
legend { height: 12px; line-height: 12px; padding: 0 3px; color: #1e4390; }
.field { height: 27px; display: flex; align-items: center; font-size: 12px; font-weight: 700; }
.field label { width: 205px; flex: none; }
.field.off label { color: #b2b2b2; }
.field input { appearance: none; width: 13px; height: 13px; margin: 1px 0 0; border: 1px solid #8b8b8b; background: linear-gradient(135deg, #cfd3da, #fff); box-shadow: inset 0 0 0 2px #f3f3f3; }
.help { align-self: flex-start; margin-left: auto; padding-top: 2px; }
.combo { position: relative; flex: 1; height: 22px; margin-right: 14px; }
.combo select { appearance: none; width: 100%; height: 22px; border: 1px solid #e3e5ec; background: #fff; opacity: 1; }
.trigger { position: absolute; top: 1px; right: 1px; width: 17px; height: 20px; padding: 7px 4px; background: #f6f6f6; border-left: 1px solid #e2e2e2; color: #c0c8d2; }
</style>
